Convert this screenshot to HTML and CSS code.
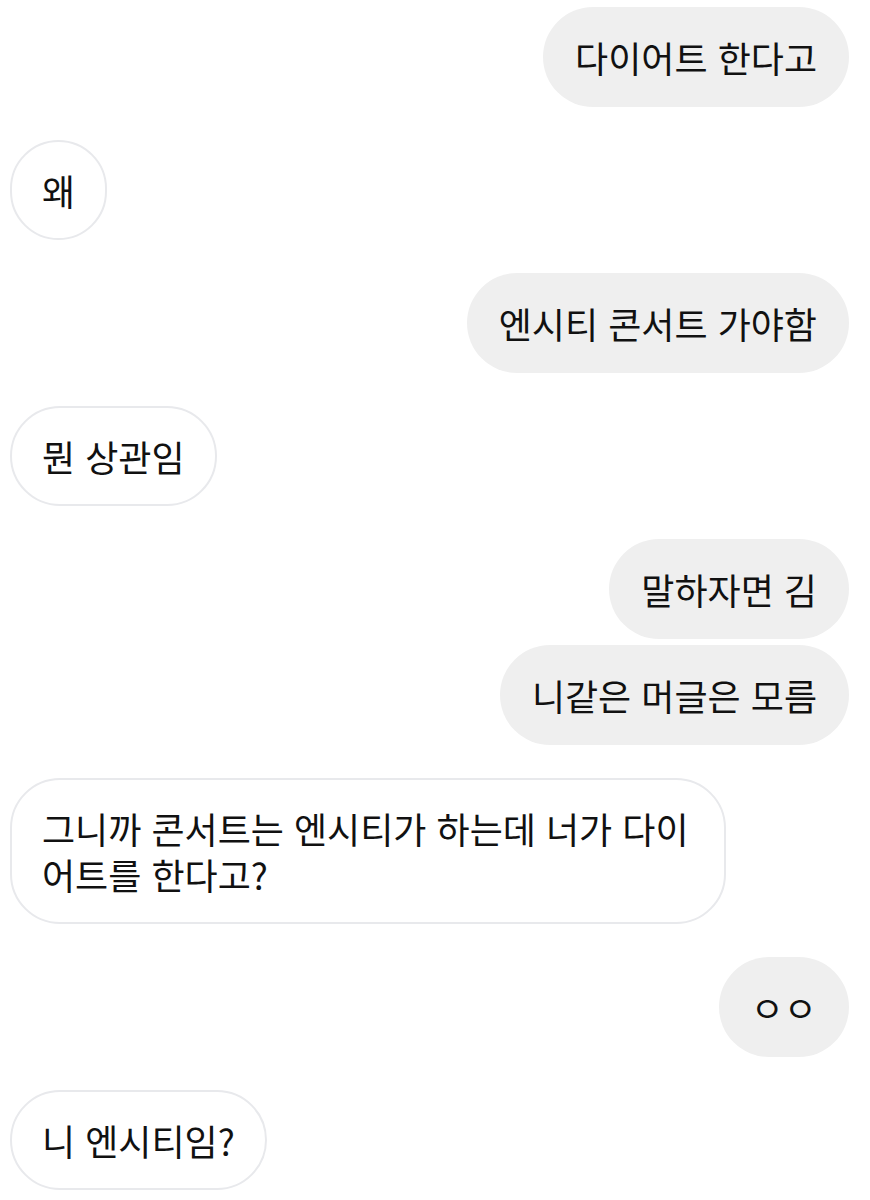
FILE: index.html
```html
<!DOCTYPE html>
<html lang="ko">
<head>
  <meta charset="UTF-8" />
  <meta name="viewport" content="width=device-width, initial-scale=1.0"/>
  <title>대화</title>
  <link rel="stylesheet" href="styles.css">
</head>
<body>

  <div class="chat">
    <div class="group mine">
      <div class="bubble">다이어트 한다고</div>
    </div>

    <div class="group theirs">
      <div class="bubble">왜</div>
    </div>

    <div class="group mine">
      <div class="bubble">엔시티 콘서트 가야함</div>
    </div>

    <div class="group theirs">
      <div class="bubble">뭔 상관임</div>
    </div>

    <div class="group mine">
      <div class="bubble">말하자면 김</div>
      <div class="bubble">니같은 머글은 모름</div>
    </div>

    <div class="group theirs">
      <div class="bubble">그니까 콘서트는 엔시티가 하는데 너가 다이어트를 한다고?</div>
    </div>

    <div class="group mine">
      <div class="bubble">ㅇㅇ</div>
    </div>

    <div class="group theirs">
      <div class="bubble">니 엔시티임?</div>
    </div>
  </div>

</body>
</html>
```

FILE: styles.css
```css
* {
  box-sizing: border-box;
  margin: 0;
  padding: 0;
}

body {
  background-color: #fff;
  color: #111;
  font-family: 'Noto Sans CJK KR', 'Noto Sans', sans-serif;
}

.chat {
  display: flex;
  flex-direction: column;
  gap: 33px;
  padding: 7px 21px 10px 10px;
}

.group {
  display: flex;
  flex-direction: column;
  gap: 6px;
}

.group.mine {
  align-items: flex-end;
}

.group.theirs {
  align-items: flex-start;
}

.bubble {
  font-size: 36px;
  line-height: 46px;
  padding: 27px 32px;
  border-radius: 50px;
  max-width: 716px;
  word-break: break-all;
}

.mine .bubble {
  background-color: #efefef;
}

.theirs .bubble {
  background-color: #fff;
  border: 2px solid #e8e9ec;
  padding: 25px 30px;
}
```
